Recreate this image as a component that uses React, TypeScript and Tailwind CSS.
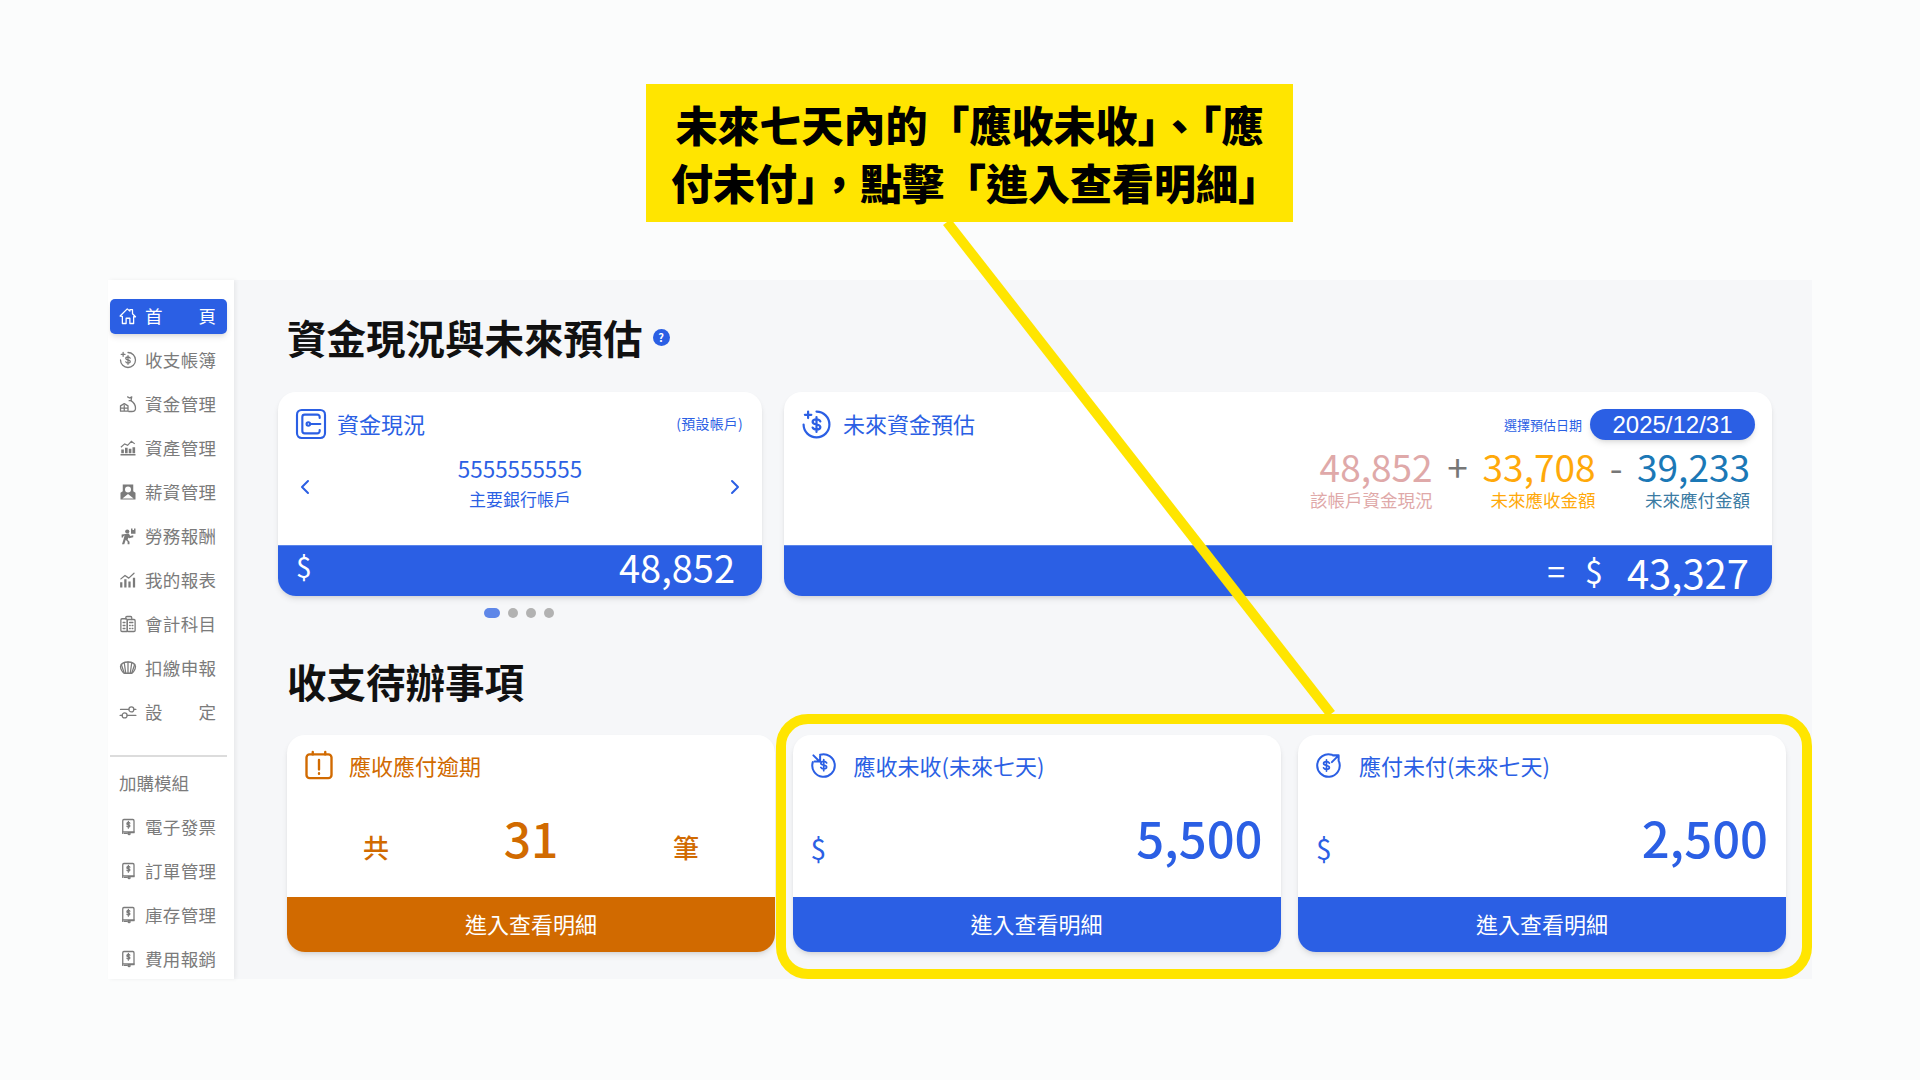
import { ChevronLeft, ChevronRight } from 'lucide-react';
import type { ReactNode } from 'react';

// shared icon wrapper, strokes take the text colour
function Ico({ size = 18, sw = 2, children }: { size?: number; sw?: number; children: ReactNode }) {
  return (
    <svg width={size} height={size} viewBox="0 0 24 24" fill="none" stroke="currentColor" strokeWidth={sw} strokeLinecap="round" strokeLinejoin="round" className="shrink-0">
      {children}
    </svg>
  );
}

const Dollar = () => (
  <path d="M15 9.6c-.5-1-1.6-1.6-3-1.6-1.7 0-3 .8-3 2s1.3 1.7 3 2 3 .8 3 2-1.3 2-3 2c-1.4 0-2.5-.6-3-1.6M12 6.2v11.6" />
);

const FutureCoin = ({ size = 31, sw = 1.7 }: { size?: number; sw?: number }) => (
  <Ico size={size} sw={sw}>
    <path d="M12 2a10 10 0 1 1-10 10" />
    <path d="M5.5 2v5M3 4.5h5" />
    <Dollar />
  </Ico>
);

const ReceiveCoin = () => (
  <Ico size={27} sw={1.8}>
    <path d="M9 2.500A10 10 0 1 1 2.500 9" />
    <path d="M3 3l5.500 5.500M9 3.500v5H4" />
    <g transform="translate(2 1.500) scale(.85)"><Dollar /></g>
  </Ico>
);

const PayCoin = () => (
  <Ico size={27} sw={1.8}>
    <path d="M15 2.500A10 10 0 1 0 21.500 9" />
    <path d="M15 9l6-6M16 3h5v5" />
    <g transform="translate(0 1.800) scale(.85)"><Dollar /></g>
  </Ico>
);

const CashIcon = () => (
  <Ico size={32} sw={1.6}>
    <rect x="1.500" y="1.500" width="21" height="21" rx="3.500" />
    <path d="M18.500 7.500V6.800a1.800 1.800 0 0 0-1.800-1.800H7.300a1.800 1.800 0 0 0-1.800 1.800v10.400A1.800 1.800 0 0 0 7.300 19h9.400a1.800 1.800 0 0 0 1.800-1.800v-.7" />
    <circle cx="10" cy="12" r="1.300" />
    <path d="M11.500 12H19" />
  </Ico>
);

const OverdueIcon = () => (
  <Ico size={30} sw={1.9}>
    <rect x="2" y="3.500" width="20" height="19" rx="2.500" />
    <path d="M7 1.500v2M17 1.500v2M12 8v7.500M12 18.600v.4" />
  </Ico>
);

const HomeIcon = () => (
  <Ico sw={1.7}>
    <path d="M1.500 12L11 2.500l3.500 3V3.500h3.500v5.500l4 4h-2.500v9H14.500v-7h-5v7H4.500v-9.500z" />
  </Ico>
);

const BagIcon = () => (
  <Ico sw={1.7}>
    <path d="M11.500 2.500l2.500 1.500 3-1.500-1 5c3 2 6 6 6 10 0 3-2 4.500-5 4.500h-4" />
    <path d="M13.500 7.500h3" />
    <path d="M2 21.500v-7l5-3 5 3v7zM2 17.500h10M7 14v7.500" />
  </Ico>
);

const AssetIcon = () => (
  <svg width="18" height="18" viewBox="0 0 24 24" className="shrink-0" fill="currentColor">
    <path d="M2 22v-2h20v2zM3 19v-5h3.500v5zM8 19v-7.500h3.500V19zM13 19v-6h3.500v6zM18 19V11h3.500v8z" />
    <path d="M2.500 11l5-4.500 4 2 5-5.500 4.500 3.500" fill="none" stroke="currentColor" strokeWidth="1.600" />
  </svg>
);

const SalaryIcon = () => (
  <svg width="18" height="18" viewBox="0 0 24 24" className="shrink-0" fill="currentColor">
    <path d="M5 2h14v9l3 2v9H2v-9l3-2zM12 4.500a4 4 0 1 0 0 8 4 4 0 0 0 0-8zM4.500 20.500h15L12 14.500z" fillRule="evenodd" />
  </svg>
);

const LaborIcon = () => (
  <svg width="18" height="18" viewBox="0 0 24 24" className="shrink-0" fill="currentColor">
    <circle cx="11" cy="6" r="2.800" />
    <path d="M6.500 9.500l6.500-1 2 3.500 4-1v2.500l-5.500 1.500-1-1-1 3 2.500 2.500V23h-2.500v-3.500L9 17l-2 6H4l2.500-8 1-4-2 1.500V14H3.500v-4z" />
    <path d="M16 2h2v2h2V2h2v7h-6z" />
  </svg>
);

const ReportIcon = () => (
  <Ico sw={1.700}>
    <path d="M3 22v-7M8.500 22V11M14 22v-8M20 22V9" strokeWidth="3" strokeLinecap="butt" />
    <path d="M2.500 10.500L8 6l5 3.500L20 3" />
  </Ico>
);

const LedgerIcon = () => (
  <Ico sw={1.700}>
    <path d="M9 5V3.500A1.500 1.500 0 0 1 10.500 2h5a1.500 1.500 0 0 1 1.500 1.500V6" />
    <path d="M11 22H4a1.500 1.500 0 0 1-1.500-1.500v-14A1.500 1.500 0 0 1 4 5h5a2 2 0 0 1 2 2z" />
    <rect x="11" y="6" width="10.500" height="16" rx="1.500" />
    <path d="M14 10h4.500M14 14h1M17.500 14h1M14 18h1M17.500 18h1M5.500 10h2.500M5.500 14h2.500M5.500 18h2.500" />
  </Ico>
);

const TaxIcon = () => (
  <Ico sw={1.700}>
    <path d="M2 10c1-4 5-6 10-6s9 2 10 6c0 4-3 8-5 9H7c-2-1-5-5-5-9z" />
    <path d="M7 5l2 14M12 4v15M17 5l-2 14M3 7l4 12M21 7l-4 12" />
  </Ico>
);

const SettingsIcon = () => (
  <Ico sw={1.700}>
    <path d="M2 8.500h11M20 8.500h2.500M1.500 16.500h3M11 16.500h11.500" />
    <circle cx="16.500" cy="8.500" r="3.300" />
    <circle cx="7.500" cy="16.500" r="3.300" />
  </Ico>
);

const AddonIcon = () => (
  <Ico sw={1.700}>
    <path d="M5 20.500V3.500A1.500 1.500 0 0 1 6.500 2h12A1.500 1.500 0 0 1 20 3.500v16h-8" />
    <path d="M5 18.500h15M7 20.500h4" />
    <circle cx="13.500" cy="21" r="1.300" />
    <path d="M14.500 7c-.4-.8-1.100-1-2-1-1.200 0-2 .5-2 1.500s.8 1.300 2 1.500 2 .6 2 1.500-.8 1.500-2 1.500c-.9 0-1.600-.3-2-1M12.500 4.500v9" />
  </Ico>
);

const mainMenu = [
  { label: '首頁', icon: <HomeIcon />, active: true },
  { label: '收支帳簿', icon: <FutureCoin size={18} sw={1.700} /> },
  { label: '資金管理', icon: <BagIcon /> },
  { label: '資產管理', icon: <AssetIcon /> },
  { label: '薪資管理', icon: <SalaryIcon /> },
  { label: '勞務報酬', icon: <LaborIcon /> },
  { label: '我的報表', icon: <ReportIcon /> },
  { label: '會計科目', icon: <LedgerIcon /> },
  { label: '扣繳申報', icon: <TaxIcon /> },
  { label: '設定', icon: <SettingsIcon /> },
];

const addonMenu = ['電子發票', '訂單管理', '庫存管理', '費用報銷'];

function MenuItem({ label, icon, active }: { label: string; icon: ReactNode; active?: boolean }) {
  return (
    <div className="h-[44px] flex items-center pl-[2px] pr-[7px]">
      <div className={`h-[35px] w-full flex items-center gap-[8px] pl-[9px] pr-[11px] rounded-[5px] ${active ? 'bg-[#2b5fe4] text-white shadow-md' : 'text-[#7b7b7b]'}`}>
        {icon}
        <span className="flex-1 text-[17.500px] leading-[24px] text-justify [text-align-last:justify]">{label}</span>
      </div>
    </div>
  );
}

function Sidebar() {
  return (
    <aside className="w-[126px] shrink-0 bg-white pt-[14px] overflow-hidden shadow-[2px_0_4px_rgba(0,0,0,0.06)] z-10">
      {mainMenu.map((m) => (
        <MenuItem key={m.label} {...m} />
      ))}
      <div className="h-[2px] mt-[21px] ml-[2px] mr-[7px] bg-[#dcdcdc]" />
      <div className="h-[44px] mt-[4px] pl-[11px] flex items-center text-[17.500px] text-[#7b7b7b]">加購模組</div>
      {addonMenu.map((label) => (
        <MenuItem key={label} label={label} icon={<AddonIcon />} />
      ))}
    </aside>
  );
}

function CashCard() {
  return (
    <div className="w-[484px] h-[204px] flex flex-col rounded-[18px] overflow-hidden bg-white shadow-md text-[#2b5fe4]">
      <div className="flex-1 px-[18px] pt-[16px]">
        <div className="flex items-center gap-[10px] -ml-[1px]">
          <CashIcon />
          <span className="flex-1 text-[22px] leading-[29px] mb-[2px]">資金現況</span>
          <span className="text-[14px] tracking-[0.2px] mr-[1px] mb-[2px]">(預設帳戶)</span>
        </div>
        <div className="flex items-start justify-between mt-[13px] -mx-[3px]">
          <ChevronLeft size={24} strokeWidth={2} className="mt-[22px]" />
          <div className="flex flex-col items-center">
            <span className="text-[22.400px] leading-[30px]">5555555555</span>
            <span className="text-[17px] leading-[26px] mt-[3px]">主要銀行帳戶</span>
          </div>
          <ChevronRight size={24} strokeWidth={2} className="mt-[22px]" />
        </div>
      </div>
      <div className="h-[51px] bg-[#2b5fe4] border-t border-[#5b85ea] flex items-center justify-between pl-[18px] pr-[27px] text-white">
        <span className="text-[28px] leading-none -mt-[11px]">$</span>
        <span className="text-[38px] leading-none -mt-[8px]">48,852</span>
      </div>
    </div>
  );
}

function ForecastPart({ value, label, valueClass, labelClass }: { value: string; label: string; valueClass: string; labelClass: string }) {
  return (
    <div className="flex flex-col items-end">
      <span className={`text-[37px] leading-[36px] ${valueClass}`}>{value}</span>
      <span className={`text-[17.500px] leading-[25px] mt-[3px] ${labelClass}`}>{label}</span>
    </div>
  );
}

function ForecastCard() {
  return (
    <div className="w-[988px] h-[204px] flex flex-col rounded-[18px] overflow-hidden bg-white shadow-md">
      <div className="flex-1 pl-[17px] pr-[17px] pt-[17px]">
        <div className="flex items-center text-[#2b5fe4]">
          <FutureCoin />
          <span className="flex-1 ml-[11px] text-[22px] leading-[29px] mb-[2px]">未來資金預估</span>
          <span className="text-[13px] mr-[8px]">選擇預估日期</span>
          <span className="w-[165px] h-[31px] rounded-full bg-[#2b5fe4] text-white text-center text-[24px] leading-[31px] font-['Liberation_Sans',sans-serif] shadow-md">2025/12/31</span>
        </div>
        <div className="flex justify-end items-start mt-[8px] pr-[5px]">
          <ForecastPart value="48,852" label="該帳戶資金現況" valueClass="text-[#dfa9a9]" labelClass="text-[#dfa9a9]" />
          <span className="w-[50px] text-center text-[37px] leading-[36px] text-[#777777]">+</span>
          <ForecastPart value="33,708" label="未來應收金額" valueClass="text-[#ffa90a]" labelClass="text-[#ffa90a]" />
          <span className="w-[41.500px] text-center text-[37px] leading-[36px] text-[#777777]">-</span>
          <ForecastPart value="39,233" label="未來應付金額" valueClass="text-[#1b78b6]" labelClass="text-[#3b7ba3]" />
        </div>
      </div>
      <div className="h-[51px] bg-[#2b5fe4] border-t border-[#5b85ea] flex items-center justify-end pr-[23px] pb-[2px] text-white">
        <span className="text-[32px] leading-none">=</span>
        <span className="text-[32px] leading-none ml-[20px]">$</span>
        <span className="text-[40px] leading-none ml-[24px] mt-[4px]">43,327</span>
      </div>
    </div>
  );
}

function TodoCard({ title, icon, color, bg, children }: { title: string; icon: ReactNode; color: string; bg: string; children: ReactNode }) {
  return (
    <div className={`w-[488px] h-[217px] flex flex-col rounded-[18px] overflow-hidden bg-white shadow-md ${color}`}>
      <div className="h-[162px] px-[18px] pt-[15px]">
        <div className="flex items-center h-[30px]">
          {icon}
          <span className="text-[22px] leading-[30px]">{title}</span>
        </div>
        {children}
      </div>
      <div className={`flex-1 flex items-center justify-center pb-[2px] text-white text-[22px] ${bg}`}>進入查看明細</div>
    </div>
  );
}

function AmountRow({ value }: { value: string }) {
  return (
    <div className="flex items-center justify-between mt-[27px]">
      <span className="text-[28px] leading-none mt-[22px]">$</span>
      <span className="text-[49px] leading-[60px] font-medium">{value}</span>
    </div>
  );
}

function Main() {
  return (
    <main className="flex-1 bg-[#f6f7f9] pt-[33px]">
      <h2 className="ml-[53px] h-[48px] flex items-center text-[39.500px] font-bold text-[#111111]">
        資金現況與未來預估
        <span className="ml-[10px] mt-[1px] w-[17px] h-[17px] rounded-full bg-[#2b5fe4] text-white text-[11px] font-bold flex items-center justify-center">?</span>
      </h2>
      <div className="flex gap-[22px] ml-[44px] mt-[31px]">
        <CashCard />
        <ForecastCard />
      </div>
      <div className="flex items-center gap-[8px] ml-[250px] mt-[12px]">
        <span className="w-[16px] h-[10px] rounded-full bg-[#5f87e8]" />
        <span className="w-[10px] h-[10px] rounded-full bg-[#b2b2b2]" />
        <span className="w-[10px] h-[10px] rounded-full bg-[#b2b2b2]" />
        <span className="w-[10px] h-[10px] rounded-full bg-[#b2b2b2]" />
      </div>
      <h2 className="ml-[53px] mt-[39px] h-[48px] flex items-center text-[39.500px] font-bold text-[#111111]">收支待辦事項</h2>
      <div className="flex gap-[17.500px] ml-[53px] mt-[30px]">
        <TodoCard title="應收應付逾期" icon={<span className="flex -ml-[1px] mr-[15px]"><OverdueIcon /></span>} color="text-[#d16a00]" bg="bg-[#d16a00]">
          <div className="flex items-center justify-between px-[58px] mt-[27px]">
            <span className="text-[26px] leading-none mt-[19px] font-medium">共</span>
            <span className="text-[48px] leading-[60px] font-medium">31</span>
            <span className="text-[26px] leading-none mt-[19px] font-medium">筆</span>
          </div>
        </TodoCard>
        <TodoCard title="應收未收(未來七天)" icon={<span className="flex -ml-[1px] mr-[17px]"><ReceiveCoin /></span>} color="text-[#2b5fe4]" bg="bg-[#2b5fe4]">
          <AmountRow value="5,500" />
        </TodoCard>
        <TodoCard title="應付未付(未來七天)" icon={<span className="flex -ml-[1px] mr-[17px]"><PayCoin /></span>} color="text-[#2b5fe4]" bg="bg-[#2b5fe4]">
          <AmountRow value="2,500" />
        </TodoCard>
      </div>
    </main>
  );
}

export default function App() {
  return (
    <div lang="zh-Hant" className="relative w-[1920px] h-[1080px] overflow-hidden bg-[#fbfcfc] pt-[280px] pb-[101px] px-[108px] font-['Noto_Sans_CJK_TC','Noto_Sans',sans-serif]">
      <div className="flex h-full">
        <Sidebar />
        <Main />
      </div>

      {/* annotation layer on top of the screenshot */}
      <svg className="absolute left-0 top-0 z-20" width="1920" height="1080" fill="none">
        <path d="M947 222L1331 714" stroke="#ffe500" strokeWidth="10" />
      </svg>
      <div className="absolute left-[776px] top-[714px] w-[1036px] h-[265px] rounded-[32px] border-[10px] border-[#ffe500] z-20" />
      <div className="absolute left-[646px] top-[84px] w-[647px] h-[138px] z-20 bg-[#ffe500] flex items-center justify-center text-center text-[42px] leading-[58px] font-black text-black">
        <p>
          未來七天內的「應收未收」、「應
          <br />
          <span className="inline-block pl-[12px]">付未付」，點擊「進入查看明細」</span>
        </p>
      </div>
    </div>
  );
}
